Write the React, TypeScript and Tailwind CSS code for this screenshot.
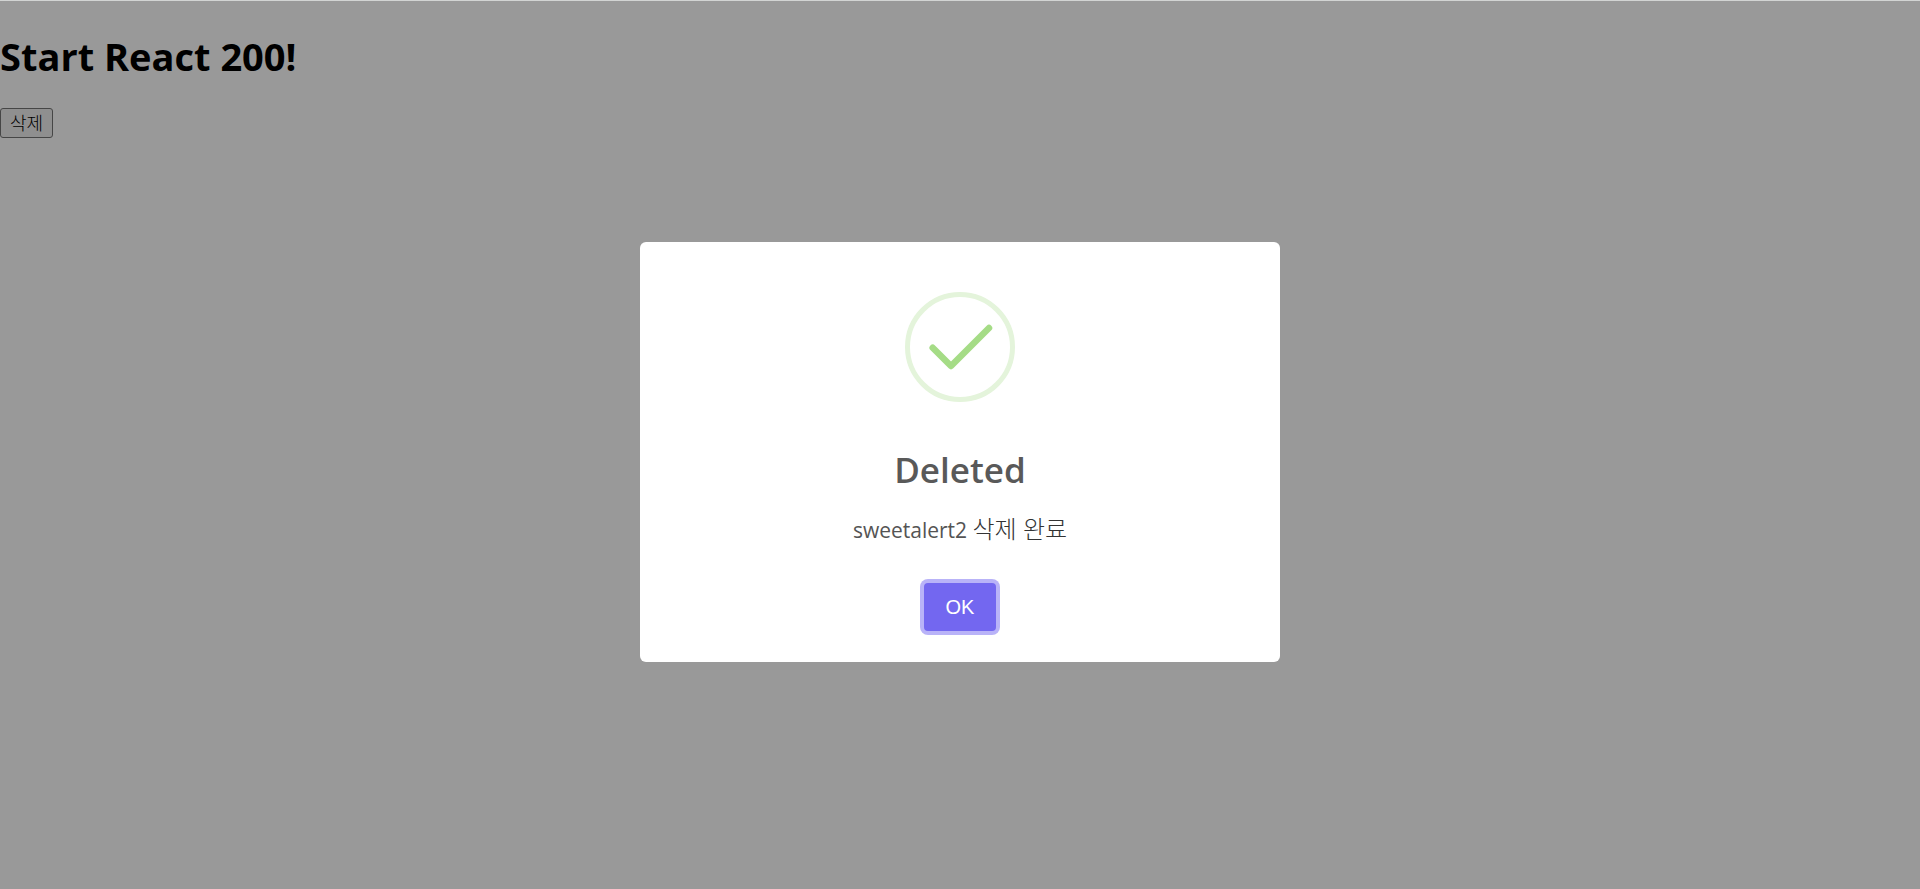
import { useState } from 'react';

export default function App() {
  const [open, setOpen] = useState(true);

  return (
    <div className="min-h-screen bg-white font-['Open_Sans','Noto_Sans_CJK_KR',sans-serif] text-black">
      <div className="h-px bg-[#d2d4d3]" />
      <h1 className="pt-7 text-[38px] leading-[54px] font-bold">Start React 200!</h1>
      <button
        type="button"
        onClick={() => setOpen(true)}
        className="mt-[25px] block h-[30px] rounded-[3px] border border-[#767676] bg-[#efefef] px-[9px] text-lg leading-7 font-light"
      >
        삭제
      </button>

      {open && (
        <div className="fixed inset-0 top-px flex items-center justify-center bg-black/40 pt-3.5">
          <div
            role="dialog"
            aria-modal="true"
            aria-labelledby="alert-title"
            className="flex w-1/3 flex-col items-center rounded-md bg-white pb-[31px]"
          >
            {/* Success icon */}
            <svg className="mt-[50px] h-[110px] w-[110px]" viewBox="0 0 110 110" fill="none">
              <circle cx="55" cy="55" r="52.5" stroke="#e4f4db" strokeWidth="5" />
              <path d="M27.7 55.7L46 74L84 36" stroke="#a5dc86" strokeWidth="6.5" strokeLinecap="round" strokeLinejoin="round" />
            </svg>

            <h2 id="alert-title" className="mt-[43px] text-[35px] leading-[50px] font-semibold text-[#595959]">
              Deleted
            </h2>
            <p className="mt-[18px] text-[21px] leading-8 text-[#545454]">
              sweetalert2 <span className="text-2xl leading-8 font-light text-[#333333]">삭제 완료</span>
            </p>

            <button
              type="button"
              onClick={() => setOpen(false)}
              className="mt-[37px] h-12 w-[72px] rounded-[4px] bg-[#7367f0] font-['Liberation_Sans',sans-serif] text-xl text-white ring-4 ring-[#b9b3f8]"
            >
              OK
            </button>
          </div>
        </div>
      )}
    </div>
  );
}
